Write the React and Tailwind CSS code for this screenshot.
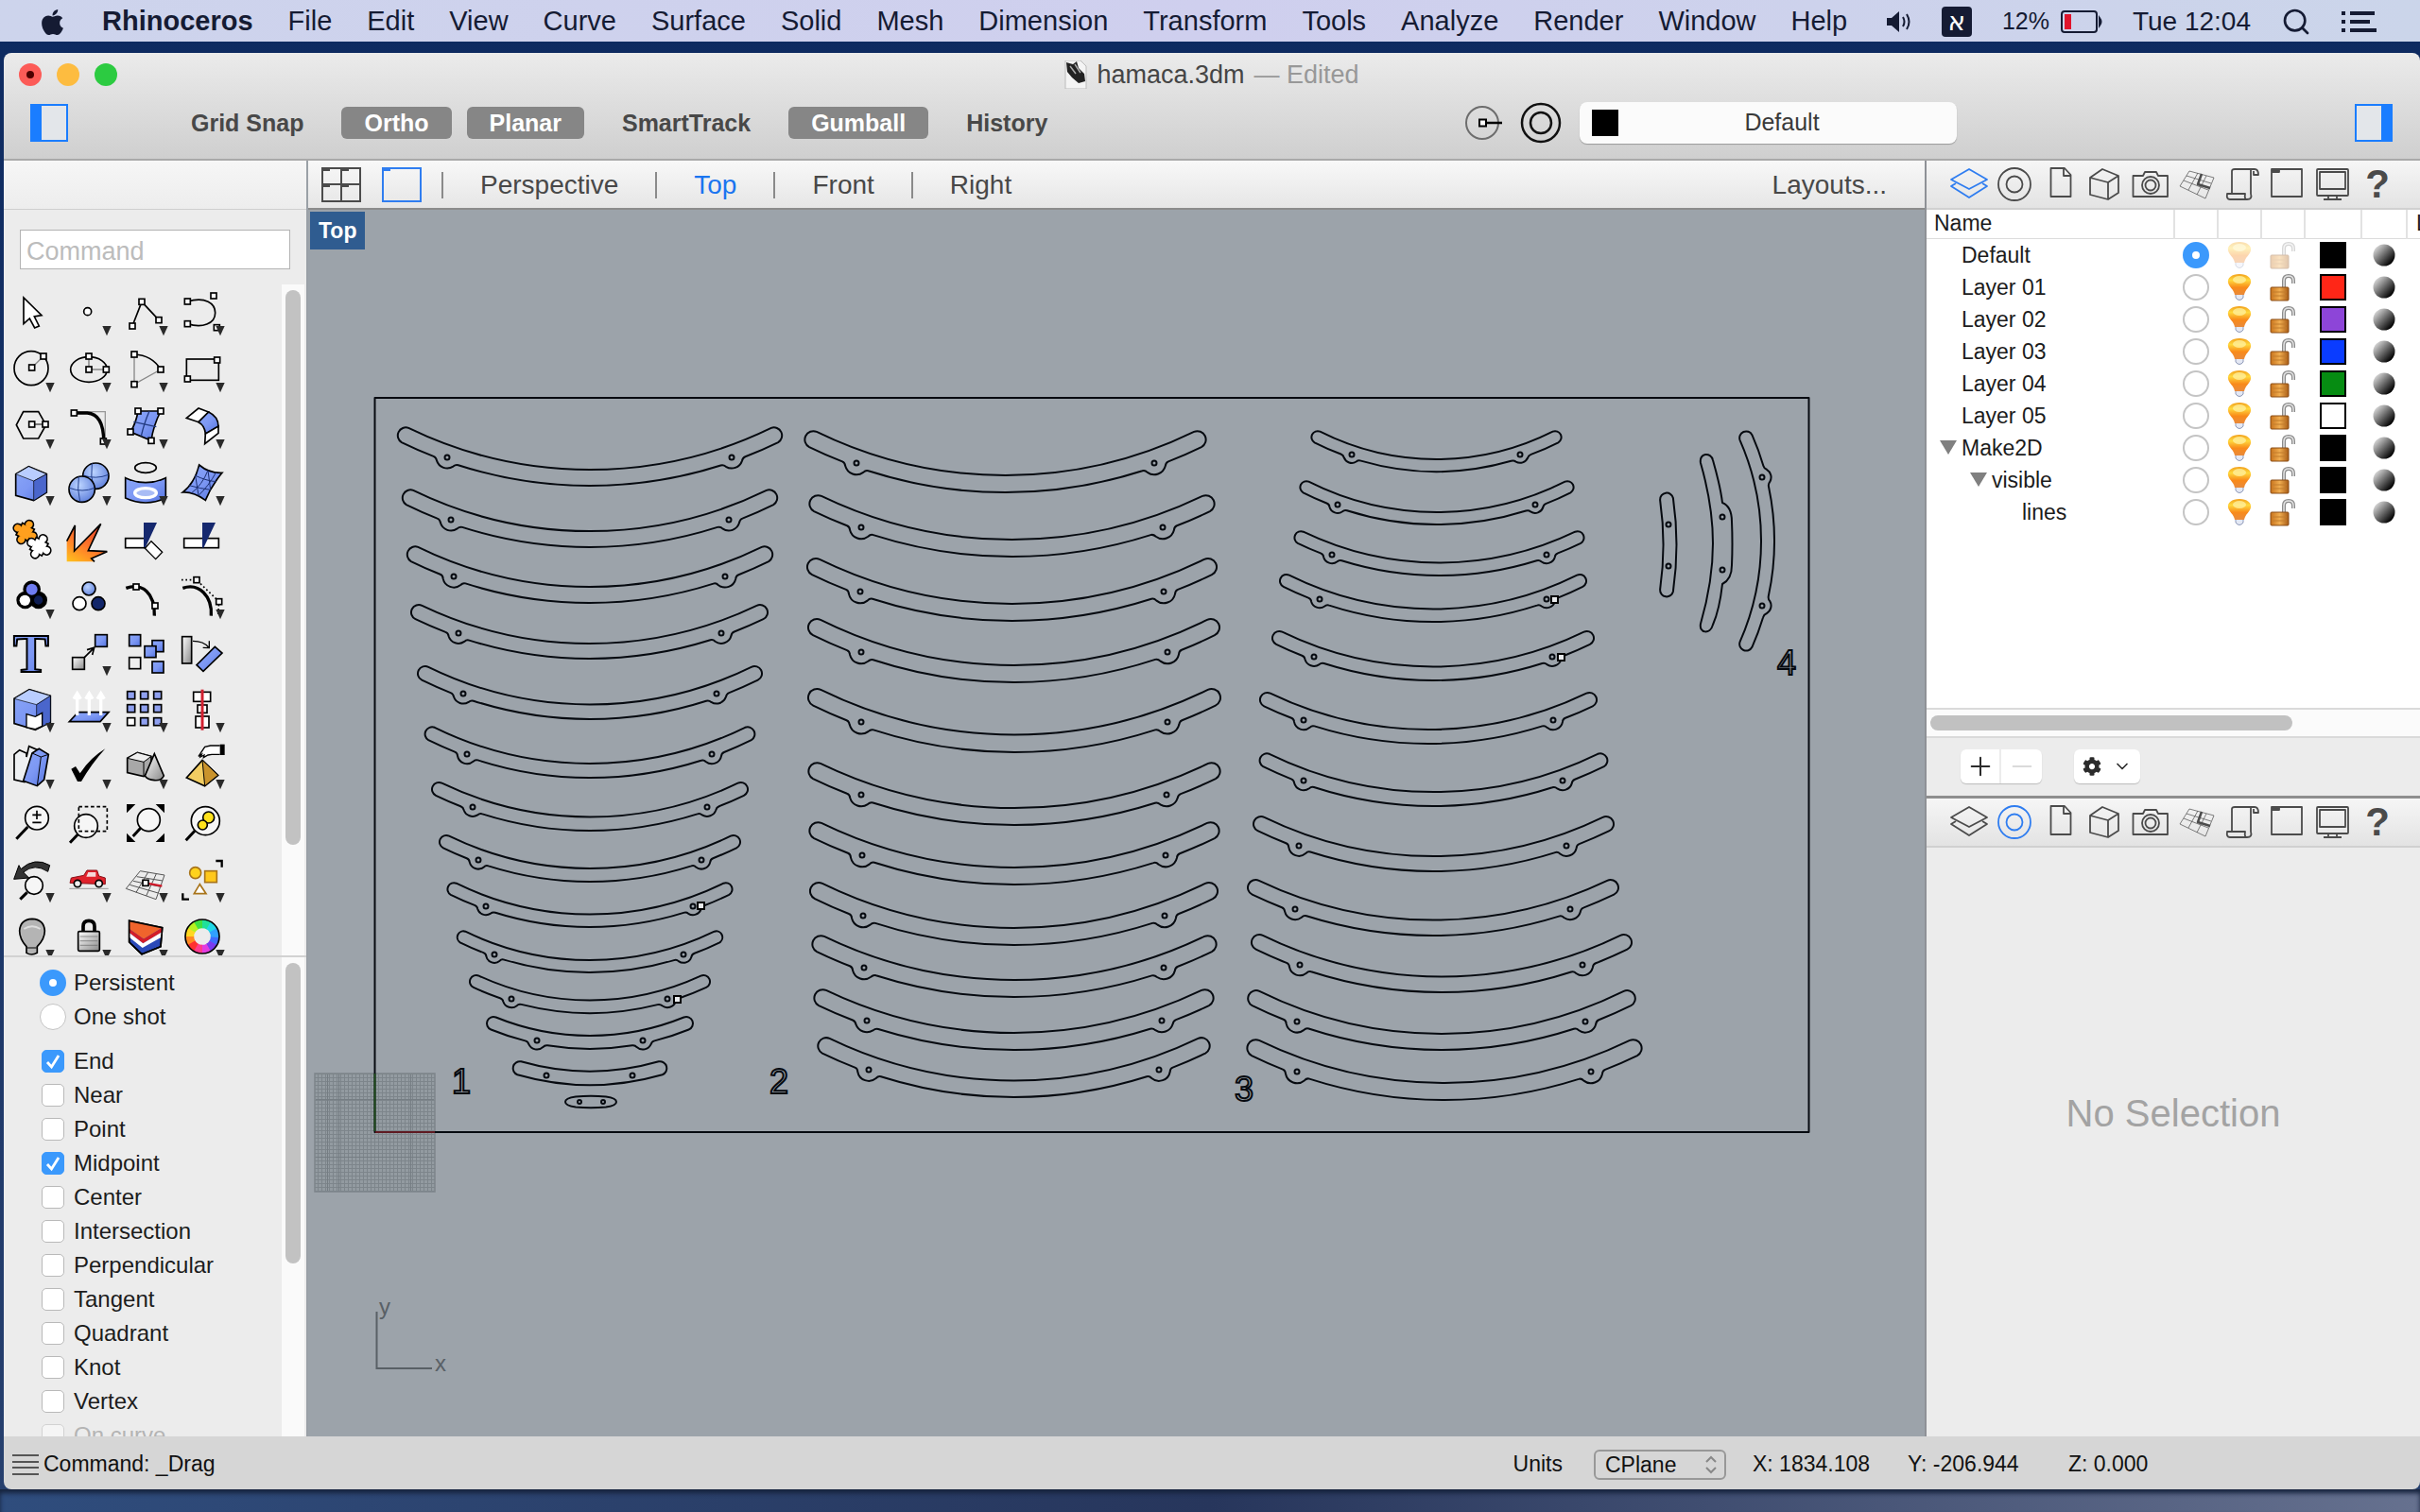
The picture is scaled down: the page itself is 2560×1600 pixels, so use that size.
import { useState } from 'react'
import { FaApple, FaCog } from 'react-icons/fa'
import { Search, ChevronDown, Plus, Minus } from 'lucide-react'
import clsx from 'clsx'

const MENUS = [
  'File', 'Edit', 'View', 'Curve', 'Surface', 'Solid', 'Mesh', 'Dimension',
  'Transform', 'Tools', 'Analyze', 'Render', 'Window', 'Help',
]

const TOGGLES = ['Grid Snap', 'Ortho', 'Planar', 'SmartTrack', 'Gumball', 'History']

const VIEWS = ['Perspective', 'Top', 'Front', 'Right']

const SNAPS = [
  'End', 'Near', 'Point', 'Midpoint', 'Center', 'Intersection',
  'Perpendicular', 'Tangent', 'Quadrant', 'Knot', 'Vertex',
]

const LAYERS = [
  { name: 'Default', color: 'bg-black', current: true },
  { name: 'Layer 01', color: 'bg-[#ff2617]' },
  { name: 'Layer 02', color: 'bg-[#8d45d8]' },
  { name: 'Layer 03', color: 'bg-[#0a3cff]' },
  { name: 'Layer 04', color: 'bg-[#068c12]' },
  { name: 'Layer 05', color: 'bg-white' },
  { name: 'Make2D', color: 'bg-black', open: true },
  { name: 'visible', color: 'bg-black', open: true, depth: 1 },
  { name: 'lines', color: 'bg-black', depth: 2 },
]

// left, right, top, bottom, thickness, hole 1 x, hole 2 x, hole y
const SLATS = [
  [420, 828, 452, 514, 17, 473, 774, 484],
  [425, 823, 518, 579, 17, 477, 771, 550],
  [430, 818, 578, 638, 17, 480, 767, 610],
  [435, 812, 640, 697, 16, 485, 763, 670],
  [442, 806, 705, 761, 15.5, 490, 758, 734],
  [449, 799, 769, 823, 15, 494, 753, 798],
  [457, 791, 828, 879, 14.5, 500, 748, 854],
  [465, 783, 884, 933, 14, 506, 742, 910],
  [473, 775, 934, 981, 13.5, 514, 733, 959],
  [483, 765, 985, 1029, 13, 523, 723, 1010],
  [497, 751, 1032, 1072, 13.5, 541, 706, 1057],
  [515, 733, 1076, 1110, 14, 568, 680, 1101],

  [851, 1276, 456, 521, 18, 906, 1221, 490],
  [856, 1285, 524, 589, 18, 911, 1230, 558],
  [854, 1287, 591, 657, 18, 910, 1231, 626],
  [855, 1290, 655, 722, 18, 911, 1235, 690],
  [855, 1291, 729, 796, 18.5, 911, 1235, 764],
  [855, 1291, 807, 873, 18, 911, 1234, 841],
  [856, 1290, 870, 936, 18, 912, 1233, 905],
  [857, 1288, 934, 1000, 18, 913, 1232, 969],
  [859, 1287, 990, 1055, 18, 914, 1231, 1024],
  [861, 1284, 1047, 1111, 18, 917, 1229, 1080],
  [865, 1280, 1098, 1161, 17.5, 919, 1226, 1132],

  [1387, 1652, 456, 499, 13, 1430, 1608, 481],
  [1375, 1665, 509, 555, 13, 1415, 1624, 534],
  [1369, 1676, 562, 609, 13.5, 1409, 1636, 587],
  [1354, 1678, 608, 658, 13.5, 1396, 1636, 634],
  [1346, 1686, 668, 720, 14.5, 1390, 1642, 695],
  [1333, 1689, 733, 787, 15, 1379, 1643, 762],
  [1332, 1701, 797, 853, 15, 1379, 1653, 826],
  [1326, 1707, 864, 922, 16, 1374, 1657, 895],
  [1320, 1712, 931, 990, 16.5, 1370, 1661, 962],
  [1324, 1726, 989, 1050, 16.5, 1375, 1674, 1021],
  [1320, 1730, 1048, 1111, 17, 1372, 1677, 1081],
  [1319, 1737, 1100, 1164, 18, 1372, 1683, 1134],
]

// Curved strip with round ends; `bumps` adds the ear round each hole on the outer side
function slatPath([xl, xr, yt, yb, t, h1, h2, hy], bumps) {
  const r = t / 2
  const a = (xr - xl) / 2 - r
  const s = yb - yt - t
  const R = (a * a + s * s) / (2 * s)
  const cx = (xl + xr) / 2
  const cy = yb - r - R
  const ri = R - r
  const ro = R + r
  const end = Math.asin(a / R)
  const on = (rad, ang) => `${(cx + rad * Math.sin(ang)).toFixed(1)} ${(cy + rad * Math.cos(ang)).toFixed(1)}`

  let d = `M${on(ri, -end)} A${ri} ${ri} 0 0 0 ${on(ri, end)} A${r} ${r} 0 0 1 ${on(ro, end)} `
  if (bumps) {
    const rb = t * 0.68
    for (const hx of [h2, h1]) {
      const dist = Math.hypot(hx - cx, hy - cy)
      const ang = Math.atan2(hx - cx, hy - cy)
      const phi = Math.acos(Math.min(1, (ro * ro + dist * dist - rb * rb) / (2 * ro * dist)))
      const cut = 3 / ro
      const lift = (base, dir) => {
        const px = cx + ro * Math.sin(base) - hx
        const py = cy + ro * Math.cos(base) - hy
        const q = Math.atan2(py, px) + dir * 0.3
        return `${(hx + rb * Math.cos(q)).toFixed(1)} ${(hy + rb * Math.sin(q)).toFixed(1)}`
      }
      d += `A${ro} ${ro} 0 0 1 ${on(ro, ang + phi + cut)} Q${on(ro, ang + phi)} ${lift(ang + phi, 1)} `
      d += `A${rb} ${rb} 0 0 1 ${lift(ang - phi, -1)} Q${on(ro, ang - phi)} ${on(ro, ang - phi - cut)} `
    }
  }
  return `${d}A${ro} ${ro} 0 0 1 ${on(ro, -end)} A${r} ${r} 0 0 1 ${on(ri, -end)}Z`
}

function Slat({ spec, bumps = true }) {
  return (
    <g>
      <path d={slatPath(spec, bumps)} />
      <circle cx={spec[5]} cy={spec[7]} r="2.5" />
      <circle cx={spec[6]} cy={spec[7]} r="2.5" />
    </g>
  )
}

function Drawing() {
  return (
    <svg viewBox="326 222 1710 1298" className="h-full w-full" aria-label="Top viewport">
      <defs>
        <pattern id="grid" width="4" height="4" patternUnits="userSpaceOnUse">
          <path d="M0 .5H4M.5 0V4" stroke="#7d858b" strokeWidth="1" />
        </pattern>
      </defs>
      <rect x="333" y="1136" width="127" height="125" fill="#939ba1" />
      <rect x="333" y="1136" width="127" height="125" fill="url(#grid)" stroke="#7d858b" strokeWidth="1.5" />
      <path d="M346.500 1137V1260M358.500 1137V1260M434.500 1137V1260M334 1163.500H459M334 1224.500H459" stroke="#757d83" />

      <g fill="none" stroke="#060a10" strokeWidth="2" strokeLinejoin="round">
        <rect x="396.500" y="421" width="1517" height="777" />
        {SLATS.map((spec) => (
          <Slat key={spec.join()} spec={spec} />
        ))}
        <Slat spec={[542, 706, 1123, 1148, 14.5, 578, 669, 1138]} bumps={false} />
        <path d="M609 1160.500Q625 1159 641 1160.500Q652 1162 652 1166Q652 1170 641 1171.500Q625 1173 609 1171.500Q598 1170 598 1166Q598 1162 609 1160.500Z" />
        <circle cx="613" cy="1166" r="2" />
        <circle cx="638" cy="1166" r="2" />
        <g transform="matrix(0 1 1 0 0 0)">
          <Slat spec={[521, 632, 1756, 1773.5, 14, 555, 599, 1765]} bumps={false} />
          <Slat spec={[456, 689, 1840, 1877, 14, 505, 641, 1864]} />
        </g>
        <path d="M1799 490C1797 479 1810 478 1812 487Q1820 515 1822 532Q1832 536 1832 552Q1833 575 1832 598Q1832 613 1822 618Q1819 645 1812 661C1809 672 1797 670 1799 660Q1812 615 1812 575Q1812 535 1799 490Z" />
        <circle cx="1822" cy="547" r="2.500" />
        <circle cx="1822" cy="603" r="2.500" />
      </g>

      {/* snap markers */}
      <g fill="#e8eaec" stroke="#000" strokeWidth="2">
        <rect x="738" y="955" width="7" height="7" />
        <rect x="713" y="1054" width="7" height="7" />
        <rect x="1641" y="631" width="7" height="7" />
        <rect x="1648" y="692" width="7" height="7" />
      </g>

      <g className="font-['Liberation_Sans']" fontSize="36" fill="#9aa2a8" stroke="#060a10" strokeWidth="2">
        <text x="478" y="1157">1</text>
        <text x="814" y="1157">2</text>
        <text x="1306" y="1165">3</text>
        <text x="1880" y="714">4</text>
      </g>

      <path d="M396.500 1136V1197" stroke="#1f4a1c" strokeWidth="2" />
      <path d="M397 1198H460" stroke="#5e1a22" strokeWidth="2" />
      <path d="M398.500 1388V1448H457" fill="none" stroke="#596066" strokeWidth="2" />
      <g className="font-['Liberation_Sans']" fontSize="24" fill="#596066">
        <text x="401" y="1391">y</text>
        <text x="460" y="1451">x</text>
      </g>
    </svg>
  )
}

function Node({ x, y }) {
  return <rect x={x - 9} y={y - 9} width="18" height="18" fill="#fff" stroke="#000" strokeWidth="5" />
}

// Jigsaw piece: the outline pass goes first, the fill pass covers the inner seams
function Piece({ x, y, fill }) {
  const shape = (
    <>
      <rect x="-19" y="-19" width="38" height="38" />
      <circle cx="0" cy="-27" r="11" />
      <circle cx="0" cy="27" r="11" />
      <circle cx="-27" cy="0" r="11" />
      <circle cx="27" cy="0" r="11" />
    </>
  )
  return (
    <g transform={`translate(${x} ${y}) rotate(28)`}>
      <g fill={fill} strokeWidth="10">{shape}</g>
      <g fill={fill} stroke="none">{shape}</g>
    </g>
  )
}

const HUES = [
  '#3f6bff', '#7a3cf0', '#e23be0', '#ff3a8c', '#ff3030', '#ff8a20',
  '#ffd820', '#b8f020', '#40e040', '#20e09a', '#20d8e8', '#30a0ff',
]

function ColorWheel() {
  return (
    <>
      {HUES.map((hue, i) => {
        const at = (n) => `${90 + 40 * Math.cos((n * Math.PI) / 6)} ${90 + 40 * Math.sin((n * Math.PI) / 6)}`
        return <path key={hue} d={`M${at(i)}A40 40 0 0 1 ${at(i + 1.1)}`} stroke={hue} strokeWidth="27" fill="none" />
      })}
      <circle cx="90" cy="90" r="54" strokeWidth="5" fill="none" />
    </>
  )
}

// Palette tools, row by row. Each is drawn in a 180 x 180 box.
const TOOLS = [
  { name: 'Select', flyout: false, art: <path d="M63 42V125L82 108L98 138L112 132L97 102L120 98Z" fill="#fff" /> },
  { name: 'Point', art: <circle cx="86" cy="86" r="12" fill="#fff" /> },
  { name: 'Polyline', art: <><path d="M48 132L78 55L132 113" /><Node x={78} y={55} /><Node x={48} y={132} /><Node x={132} y={113} /></> },
  { name: 'Control point curve', art: <><path d="M43 54C100 38 131 60 131 90C131 125 90 140 43 125" /><Node x={43} y={54} /><Node x={126} y={36} /><Node x={43} y={125} /><Node x={136} y={137} /></> },

  { name: 'Circle', art: <><circle cx="87" cy="86" r="54" /><path d="M89 84L126 48" stroke="#888" strokeWidth="4" /><Node x={89} y={84} /><Node x={126} y={48} /></> },
  { name: 'Ellipse', art: <><ellipse cx="90" cy="90" rx="58" ry="40" /><path d="M90 48V90H145" stroke="#555" strokeWidth="3" /><Node x={90} y={48} /><Node x={90} y={90} /><Node x={145} y={90} /></> },
  { name: 'Arc', art: <><path d="M54 42V137L138 90" stroke="#888" strokeWidth="4" /><path d="M54 42Q110 44 138 90" /><Node x={54} y={42} /><Node x={138} y={90} /><Node x={54} y={137} /></> },
  { name: 'Rectangle', art: <><rect x="40" y="57" width="102" height="67" /><Node x={43} y={120} /><Node x={137} y={60} /></> },

  { name: 'Polygon', art: <><path d="M40 86L62 44H110L134 86L110 129H62Z" /><path d="M89 84H132" strokeWidth="3" /><Node x={89} y={84} /><Node x={132} y={84} /></> },
  { name: 'Fillet curves', art: <><path d="M43 44H142V138" stroke="#999" strokeWidth="4" /><path d="M43 48H85Q137 52 137 138" strokeWidth="10" /><Node x={43} y={48} /><Node x={136} y={138} /></> },
  { name: 'Surface from points', art: <><path d="M66 42H138Q114 90 108 136L42 108Q60 80 66 42Z" fill="url(#blue)" /><path d="M102 42Q84 84 76 122M52 76L124 92" stroke="#223a80" strokeWidth="4" /><Node x={66} y={42} /><Node x={138} y={42} /><Node x={108} y={136} /><Node x={42} y={108} /></> },
  { name: 'Fillet surfaces', art: <><path d="M40 64L78 33L110 45L78 77Z" fill="#fff" /><path d="M78 77L110 45Q142 60 141 92L100 114Q98 88 78 77Z" fill="url(#blue)" /><path d="M100 114L141 90V112L98 146Z" fill="#fff" /></> },

  { name: 'Box', art: <><path d="M38 62L79 38L136 62V120L95 146L38 130Z" fill="url(#blue)" /><path d="M38 62L79 38L136 62L95 84Z" fill="#b9cdff" strokeWidth="2" /><path d="M95 84L136 62V120L95 146Z" fill="#4a66cc" strokeWidth="2" /></> },
  { name: 'Sphere', art: <><circle cx="112" cy="68" r="41" fill="url(#ball)" /><path d="M100 28Q94 70 106 108M72 66Q112 80 152 64" strokeWidth="3" stroke="#24408c" /><circle cx="68" cy="110" r="41" fill="url(#ball)" /><path d="M58 70Q52 110 62 150M28 106Q70 122 108 106" strokeWidth="3" stroke="#24408c" /></> },
  { name: 'Project curves', art: <><ellipse cx="90" cy="42" rx="34" ry="16" /><path d="M26 74Q90 104 154 74V138Q90 168 26 138Z" fill="url(#blue)" /><ellipse cx="90" cy="122" rx="34" ry="15" stroke="#fff" strokeWidth="10" fill="#a9bcf5" /></> },
  { name: 'Mesh', art: <><path d="M80 33Q112 60 153 58Q118 100 100 145Q62 118 28 120Q66 90 80 33Z" fill="url(#blue)" /><path d="M108 50Q90 96 56 122M134 56Q110 100 78 130M66 66Q104 84 134 86M48 98Q84 108 116 112M68 66L78 130M108 50L116 112" strokeWidth="3" stroke="#1c2f70" /></> },

  { name: 'Join', flyout: false, art: <><Piece x={68} y={66} fill="#ffa01e" /><Piece x={112} y={112} fill="#fff" /></> },
  { name: 'Explode', flyout: false, art: <><path d="M20 160V95L46 45L44 126L128 40L88 125L148 128L98 150L108 160Z" fill="url(#fire)" stroke="none" /><path d="M20 95L46 45L44 126L128 40L88 125L148 128L98 150L108 160" /></> },
  { name: 'Trim', flyout: false, art: <><rect x="26" y="86" width="62" height="30" fill="#fff" /><path d="M108 95L143 130L122 152L88 118Z" fill="#fff" strokeWidth="4" /><path d="M84 36H126L90 114H84Z" fill="#15286e" stroke="none" /></> },
  { name: 'Split', flyout: false, art: <><rect x="32" y="86" width="110" height="30" fill="#fff" /><path d="M90 36H132L94 116H90Z" fill="#15286e" stroke="none" /></> },

  { name: 'Group', art: <><g strokeWidth="14"><circle cx="89" cy="68" r="21" fill="#6f7cf0" /><circle cx="68" cy="102" r="21" fill="#fff" /><circle cx="110" cy="102" r="21" fill="#0e1d52" /></g><circle cx="89" cy="68" r="18" fill="#6f7cf0" stroke="none" /><circle cx="67" cy="103" r="17" fill="#fff" stroke="none" /></> },
  { name: 'Ungroup', flyout: false, art: <><circle cx="90" cy="66" r="21" fill="url(#ball)" /><circle cx="60" cy="113" r="21" fill="#fff" /><circle cx="120" cy="113" r="21" fill="#12266a" /></> },
  { name: 'Edit points', flyout: false, art: <><path d="M28 64C80 46 120 80 118 152" strokeWidth="10" /><Node x={60} y={60} /><Node x={120} y={120} /></> },
  { name: 'Control points', art: <><path d="M28 64C80 46 122 90 118 152" strokeWidth="10" /><path d="M24 38H72L143 107L140 150" strokeDasharray="5 8" /><Node x={72} y={38} /><Node x={143} y={107} /></> },

  { name: 'Text', flyout: false, art: <text x="87" y="151" textAnchor="middle" fontSize="170" fontWeight="bold" fill="url(#blue)" strokeWidth="6" className="font-['Liberation_Serif']">T</text> },
  { name: 'Move', art: <><rect x="110" y="32" width="38" height="38" fill="url(#blue)" /><rect x="38" y="104" width="38" height="38" fill="url(#grey)" /><path d="M76 104L107 73M84 80L107 73L101 96" /></> },
  { name: 'Copy', flyout: false, art: <><rect x="38" y="32" width="36" height="36" fill="url(#blue)" /><rect x="111" y="50" width="36" height="36" fill="url(#blue)" /><rect x="87" y="68" width="36" height="36" fill="url(#blue)" /><rect x="38" y="104" width="36" height="36" fill="#eee" /><rect x="111" y="117" width="36" height="36" fill="url(#blue)" /></> },
  { name: 'Rotate', flyout: false, art: <><rect x="26" y="38" width="30" height="85" fill="url(#grey)" /><path d="M130 70L153 90L93 148L72 128Z" fill="url(#blue)" /><path d="M60 52Q94 52 110 72M112 52V74L92 73" strokeWidth="4" /></> },

  { name: 'Solid editing', art: <><path d="M33 55L81 26L148 46V130L100 154L33 134Z" fill="url(#blue)" /><path d="M33 55L81 26L148 46L104 74Z" fill="#b9cdff" strokeWidth="2" /><path d="M104 74L148 46V130L104 152Z" fill="#4a66cc" strokeWidth="2" /><path d="M72 104L100 112L122 100V142L100 152L72 146Z" fill="#fff" strokeWidth="4" /></> },
  { name: 'Extrude', art: <><path d="M56 98H153L126 128H28Z" fill="url(#blue)" /><path d="M53 108V40M91 108V40M128 108V40M42 56L53 38L64 56M80 56L91 38L102 56M117 56L128 38L139 56" stroke="#fff" strokeWidth="10" /></> },
  { name: 'Array', art: <>{[32, 74, 116].map((y) => [32, 74, 116].map((x) => <rect key={`${x}${y}`} x={x} y={y} width="24" height="24" fill={x === 32 && y === 116 ? '#fff' : '#8fa0f0'} />))}</> },
  { name: 'Align', art: <><rect x="62" y="34" width="54" height="30" fill="#fff" /><rect x="75" y="75" width="30" height="25" fill="#fff" /><rect x="69" y="111" width="42" height="36" fill="#fff" /><path d="M90 26V155" stroke="#d22030" strokeWidth="9" /></> },

  { name: 'Deform', art: <><path d="M33 52L50 38L72 48V60L80 26L136 50L66 140L33 132Z" fill="#eef0f2" /><path d="M90 48L112 34L142 52L128 132L106 152L62 136Z" fill="url(#blue)" /><path d="M90 48L118 60L142 52M118 60L106 152" strokeWidth="3" /></> },
  { name: 'Check', art: <path d="M34 98L48 90L62 112Q95 62 142 34Q100 80 66 138H54Z" fill="#000" stroke="none" /> },
  { name: 'Boolean', art: <><path d="M32 64L64 46L108 58V106L84 122L32 110Z" fill="#a8a8a8" /><path d="M32 64L64 46L108 58L84 76Z" fill="#eee" strokeWidth="3" /><path d="M84 76V122" strokeWidth="3" /><path d="M118 50L148 120Q140 136 118 134Q96 132 88 120Z" fill="url(#grey)" /></> },
  { name: 'Edit solid', art: <><path d="M90 70L140 118L98 152L40 126Z" fill="#f2cd62" /><path d="M90 70L98 152L140 118Z" fill="#c9932c" strokeWidth="3" /><path d="M146 24H116L98 28L78 58L88 52L84 60L96 54L94 62L108 54L120 52H146" fill="#fff" strokeWidth="4" /><path d="M146 20H161V54H146Z" fill="#000" stroke="none" /></> },

  { name: 'Zoom dynamic', flyout: false, art: <><circle cx="105" cy="74" r="37" fill="#f6f6f6" /><path d="M105 50V78M91 64H119M91 88H119" /><path d="M76 102L40 140" strokeWidth="9" /></> },
  { name: 'Zoom window', flyout: false, art: <><circle cx="81" cy="99" r="37" fill="#f6f6f6" /><rect x="58" y="38" width="90" height="78" strokeDasharray="11 8" /><path d="M55 126L30 152" strokeWidth="9" /></> },
  { name: 'Zoom extents', flyout: false, art: <><circle cx="100" cy="80" r="36" fill="#f6f6f6" /><path d="M74 106L50 132" strokeWidth="9" /><path d="M30 30H58L30 58ZM150 30H122L150 58ZM30 150H58L30 122ZM150 150H122L150 122Z" fill="#000" stroke="none" /></> },
  { name: 'Zoom selected', flyout: false, art: <><circle cx="100" cy="83" r="45" fill="#f6f6f6" /><circle cx="110" cy="72" r="18" fill="#ffe21c" /><circle cx="91" cy="96" r="15" fill="#ffe21c" /><path d="M66 115L38 145" strokeWidth="9" /></> },

  { name: 'Undo view', art: <><path d="M62 66Q98 36 140 64L146 44Q98 16 54 56L48 44L32 88L80 84Z" fill="#333" strokeWidth="3" /><circle cx="96" cy="108" r="28" fill="#f6f6f6" /><path d="M74 130L52 152" strokeWidth="9" /></> },
  { name: 'Named view', art: <><path d="M30 100L34 84L74 76L84 60H116L122 78L142 84V104Z" fill="#e0222c" stroke="#8a1018" strokeWidth="3" /><path d="M88 66H112V80H82Z" fill="#f6d8d8" stroke="none" /><circle cx="54" cy="102" r="11" fill="#eee" /><circle cx="122" cy="102" r="11" fill="#eee" /><path d="M28 118H152" stroke="#999" strokeWidth="3" /></> },
  { name: 'CPlane', art: <><path d="M73 62L150 75L123 152L28 118ZM98 66L60 130M124 71L92 141M62 80L144 93M51 94L137 112M40 106L130 132" stroke="#555" strokeWidth="3" /><path d="M90 100L142 110" stroke="#d01828" strokeWidth="7" /><Node x={90} y={100} /></> },
  { name: 'Selection filter', art: <><path d="M133 30H152V50M28 133V152H48" strokeWidth="7" /><g stroke="#a8741a"><circle cx="68" cy="68" r="18" fill="#ffd21c" /><rect x="98" y="62" width="38" height="36" fill="#ffc81c" /><path d="M82 104L64 134H102Z" fill="#fff" /></g></> },

  { name: 'Show', art: <><path d="M72 142V122Q50 98 50 72Q52 36 90 34Q128 36 130 72Q130 98 106 122V142Q88 152 72 142Z" fill="#b4b4b4" /><path d="M74 126H104" strokeWidth="3" /><path d="M64 66Q90 50 116 66" stroke="#ddd" strokeWidth="6" /></> },
  { name: 'Lock', art: <><path d="M72 74V58Q72 40 90 40Q108 40 108 58V74" strokeWidth="11" /><rect x="56" y="74" width="68" height="62" rx="4" fill="url(#grey)" /><path d="M62 90H118M62 104H118M62 118H118" strokeWidth="2" stroke="#666" /></> },
  { name: 'Layers', art: <><path d="M38 40L143 62L138 122L78 146L38 108Z" fill="#2b49b8" /><path d="M38 40L143 62L84 98L38 66Z" fill="#f0642c" stroke="none" /><path d="M38 66L84 98L143 62V76L82 112L38 78Z" fill="#d41c28" stroke="none" /><path d="M38 78L82 112L142 76L140 92L80 126L38 92Z" fill="#fff" stroke="none" /><path d="M38 40L143 62L138 122L78 146L38 108Z" /></> },
  { name: 'Object color', art: <ColorWheel /> },
]

function ToolButton({ tool }) {
  return (
    <button type="button" aria-label={tool.name} className="size-[60px]">
      <svg viewBox="0 0 180 180" className="size-[60px]" fill="none" stroke="#000" strokeWidth="5">
        {tool.art}
        {tool.flyout !== false && <path d="M133 132H161L147 163Z" fill="#2a2a2a" stroke="none" />}
      </svg>
    </button>
  )
}

// Shared paints for the palette and layer icons
function Paints() {
  return (
    <svg className="absolute size-0" aria-hidden="true">
      <defs>
        <linearGradient id="blue" x1="0" y1="0" x2="1" y2="1">
          <stop offset="0" stopColor="#8aa6f8" />
          <stop offset=".5" stopColor="#7d98f4" />
          <stop offset="1" stopColor="#5474e0" />
        </linearGradient>
        <radialGradient id="ball" cx=".4" cy=".35" r=".7">
          <stop offset="0" stopColor="#bcd4ff" />
          <stop offset="1" stopColor="#5f80dc" />
        </radialGradient>
        <linearGradient id="grey" x1="0" y1="0" x2="1" y2="1">
          <stop offset="0" stopColor="#fff" />
          <stop offset="1" stopColor="#888" />
        </linearGradient>
        <linearGradient id="fire" x1="0" y1="1" x2=".6" y2="0">
          <stop offset="0" stopColor="#ffc21c" />
          <stop offset=".5" stopColor="#ff7a2a" />
          <stop offset="1" stopColor="#e8482a" />
        </linearGradient>
        <linearGradient id="lamp" x1="0" y1="0" x2="0" y2="1">
          <stop offset="0" stopColor="#f2a01c" />
          <stop offset=".3" stopColor="#ffd83c" />
          <stop offset=".65" stopColor="#f98a1a" />
          <stop offset="1" stopColor="#e88a3c" />
        </linearGradient>
        <linearGradient id="brass" x1="0" y1="0" x2="1" y2="0">
          <stop offset="0" stopColor="#c8731c" />
          <stop offset=".5" stopColor="#f0ad50" />
          <stop offset="1" stopColor="#a85c16" />
        </linearGradient>
        <linearGradient id="orb" x1=".1" y1=".15" x2=".85" y2=".85">
          <stop offset="0" stopColor="#d8d8d8" />
          <stop offset=".5" stopColor="#6a6a6a" />
          <stop offset="1" stopColor="#000" />
        </linearGradient>
      </defs>
    </svg>
  )
}

const PANELS = [
  { name: 'Layers', art: <><path d="M24 8L43 19L24 29L5 19Z" /><path d="M10 23L5 26L24 38L43 26L38 23" /></> },
  { name: 'Properties', art: <><circle cx="24" cy="24" r="17" /><circle cx="24" cy="24" r="8.500" /></> },
  { name: 'Notes', art: <><path d="M14.500 7H29L35.500 14V37H14.500Z" /><path d="M28 7V15H35" /></> },
  { name: 'Blocks', art: <path d="M8 17L21 8L38 15V33L27 40L8 35ZM8 17L27 22L38 15M27 22V40" /> },
  { name: 'Named views', art: <><path d="M5.500 15H16L18 11H30L32 15H42V37H5.500Z" /><circle cx="24" cy="25" r="9" /><circle cx="24" cy="25" r="5.500" /></> },
  { name: 'Named CPlanes', art: <><path d="M17 10L43 17L34 39L7 26ZM26 12L16 30M35 15L25 35M14 15L40 23M11 20L37 30" strokeWidth="1" opacity=".7" /><path d="M30 13L26 24L39 28" strokeWidth="2.500" /></> },
  { name: 'Command history', art: <path d="M14 34V10Q14 8 17 8H38Q42 8 42 14H37V10M34 8V34Q36 40 30 40H12Q8 40 9 34H28Q27 40 30 40" /> },
  { name: 'Layouts', art: <><path d="M8 8H40V37H8Z" /><path d="M9 9H16V11H9Z" fill="currentColor" /></> },
  { name: 'Display', art: <><rect x="8" y="8" width="33" height="28" rx="1" /><rect x="11" y="11" width="27" height="18" /><path d="M20 36V39M29 36V39M15 40H34" /></> },
]

function PanelTabs({ active }) {
  return (
    <nav className="flex h-[50px] shrink-0 items-center bg-linear-to-b from-[#f6f6f6] to-[#e3e3e3] pl-[21px] text-[#4b4b4b]">
      {PANELS.map((panel) => (
        <button
          key={panel.name}
          type="button"
          aria-label={panel.name}
          className={clsx('size-12 shrink-0', panel.name === active && 'text-[#2f7df0]')}
        >
          <svg viewBox="0 0 48 48" className="size-12" fill="none" stroke="currentColor" strokeWidth="1.800" strokeLinejoin="round">
            {panel.art}
          </svg>
        </button>
      ))}
      <button type="button" className="w-12 shrink-0 text-[42px] leading-[48px] font-bold">?</button>
    </nav>
  )
}

function MenuBar() {
  return (
    <header className="flex h-11 shrink-0 items-center bg-linear-to-r from-[#cdd4ec] via-[#cfcfee] to-[#cbd5ea] pt-[2px] pr-[46px] pl-10 text-[29px] whitespace-nowrap text-[#151b33]">
      <button type="button" aria-label="Apple menu" className="w-[31px]">
        <FaApple className="size-[31px]" />
      </button>
      <nav className="ml-[37px] flex gap-[37px]">
        <button type="button" className="font-bold">Rhinoceros</button>
        {MENUS.map((menu) => (
          <button key={menu} type="button">{menu}</button>
        ))}
      </nav>
      <div className="ml-auto flex items-center gap-8">
        <svg viewBox="0 0 26 28" className="h-7 w-[26px]" fill="currentColor">
          <path d="M0 10H5L13 3V25L5 18H0Z" />
          <path d="M17 9Q20 14 17 19M21 6Q26 14 21 22" fill="none" stroke="currentColor" strokeWidth="2" />
        </svg>
        <span className="flex h-8 w-8 items-center justify-center rounded bg-[#151b33] font-['DejaVu_Sans'] text-[28px] leading-none text-white">א</span>
        <div className="flex items-center gap-3 text-[25px]">
          12%
          <svg viewBox="0 0 44 24" className="h-6 w-11" fill="none" stroke="currentColor" strokeWidth="2">
            <rect x="1" y="1" width="37" height="22" rx="3" />
            <rect x="4" y="4" width="7" height="16" fill="#e0142c" stroke="none" />
            <path d="M41 8Q44 12 41 16Z" fill="currentColor" />
          </svg>
        </div>
        <span className="text-[28px]">Tue 12:04</span>
        <Search className="size-8" strokeWidth={2} />
        <svg viewBox="0 0 37 22" className="h-[22px] w-[37px]" stroke="currentColor" strokeWidth="4">
          <path d="M0 2H4M9 2H35M0 11H4M9 11H30M0 20H4M9 20H37" />
        </svg>
      </div>
    </header>
  )
}

function SidebarButton({ side }) {
  return (
    <button type="button" aria-label={`Toggle ${side} sidebar`} className="h-10 w-10 border-2 border-[#1a7dff] bg-[#e3e6ea]">
      <span className={clsx('block h-full w-[10px] bg-[#1a7dff]', side === 'right' && 'ml-auto')} />
    </button>
  )
}

function TitleBar() {
  const [on, setOn] = useState(['Ortho', 'Planar', 'Gumball'])

  function toggle(name) {
    setOn((prev) => (prev.includes(name) ? prev.filter((n) => n !== name) : [...prev, name]))
  }

  return (
    <div className="shrink-0 rounded-t-lg border-b-2 border-[#a9a9a9] bg-linear-to-b from-[#ebebeb] to-[#cfcfcf] pb-[10px]">
      <div className="grid h-[46px] grid-cols-[1fr_auto_1fr] items-center">
        <div className="flex gap-4 pl-4">
          <button type="button" aria-label="Close" className="flex size-6 items-center justify-center rounded-full bg-[#fc5b57]">
            <span className="size-2 rounded-full bg-[#4d0000]" />
          </button>
          <button type="button" aria-label="Minimize" className="size-6 rounded-full bg-[#fdbc40]" />
          <button type="button" aria-label="Zoom" className="size-6 rounded-full bg-[#2ccb41]" />
        </div>
        <h1 className="flex items-center gap-[10px] text-[27px] text-[#454545]">
          <svg viewBox="0 0 24 30" className="h-[30px] w-6">
            <path d="M1 0H17L23 6V30H1Z" fill="#f4f4f4" stroke="#bbb" />
            <path d="M2 2L9 4L13 1L15 8L21 14L22 22L15 24L8 18L3 12Z" fill="#222" />
            <path d="M6 6L12 14M11 4L17 13" stroke="#aaa" strokeWidth="1.500" />
          </svg>
          <span className="flex gap-[10px]">hamaca.3dm <span className="text-[#989898]">— Edited</span></span>
        </h1>
      </div>
      <div className="flex h-14 items-center pr-[29px] pl-7">
        <SidebarButton side="left" />
        <div className="ml-[106px] flex gap-4">
          {TOGGLES.map((name) => (
            <button
              key={name}
              type="button"
              aria-pressed={on.includes(name)}
              onClick={() => toggle(name)}
              className={clsx(
                'h-[34px] rounded-md px-6 text-[25px] leading-[34px] font-bold',
                on.includes(name) ? 'bg-[#868686] text-white' : 'text-[#484848]',
              )}
            >
              {name}
            </button>
          ))}
        </div>
        <div className="mr-[421px] ml-auto flex items-center">
          <svg viewBox="0 0 42 42" className="size-[42px]" fill="none" stroke="#6d6d6d" strokeWidth="2">
            <circle cx="18" cy="21" r="17" />
            <path d="M20 21H39" stroke="#000" strokeWidth="2.500" />
            <rect x="15" y="17.500" width="7" height="7" fill="#fff" stroke="#000" />
          </svg>
          <svg viewBox="0 0 44 44" className="ml-4 size-11" fill="none" stroke="#111" strokeWidth="2.500">
            <circle cx="22" cy="22" r="20" />
            <circle cx="22" cy="22" r="11" />
          </svg>
          <label className="ml-[19px] flex h-11 w-[399px] items-center rounded-lg bg-[#fbfbfb] pr-3 pl-[13px] shadow-[0_1px_1px_#9a9a9a]">
            <span className="size-7 shrink-0 bg-black" />
            <select aria-label="Current layer" className="w-full appearance-none bg-transparent text-center text-[25px] text-[#3a3a3a] [text-align-last:center]">
              <option>Default</option>
            </select>
          </label>
        </div>
        <SidebarButton side="right" />
      </div>
    </div>
  )
}

function ScrollTrack({ thumb }) {
  return (
    <div className="mr-[2px] flex w-6 shrink-0 justify-center bg-[#fafafa] pt-[6px]">
      <div className={clsx('w-4 rounded-full bg-[#c2c2c2]', thumb)} />
    </div>
  )
}

function SnapOption({ label, type = 'checkbox', disabled, checked }) {
  return (
    <label className={clsx('flex h-9 items-center text-[24px] leading-9', disabled ? 'text-[#b4b4b4]' : 'text-[#1c1c1c]')}>
      <span className="relative flex w-7 items-center justify-center">
        <input
          type={type}
          name={type === 'radio' ? 'snap-mode' : undefined}
          defaultChecked={checked}
          disabled={disabled}
          className={clsx(
            'peer appearance-none border bg-white',
            type === 'radio'
              ? 'size-7 rounded-full border-[#c4c4c4] checked:border-[10px] checked:border-[#3b99fc]'
              : 'size-6 rounded-[5px] border-[#b9b9b9] checked:border-[#3b99fc] checked:bg-[#3b99fc]',
            disabled && 'opacity-50',
          )}
        />
        {type === 'checkbox' && (
          <svg viewBox="0 0 24 24" className="pointer-events-none absolute hidden size-6 peer-checked:block" fill="none" stroke="#fff" strokeWidth="2.800">
            <path d="M6 13L10.500 18L18 6" />
          </svg>
        )}
      </span>
      <span className="ml-2">{label}</span>
    </label>
  )
}

function LeftSidebar() {
  return (
    <aside className="flex w-[322px] shrink-0 flex-col border-r-2 border-[#9aa0a6] bg-[#ececec]">
      <div className="h-[52px] shrink-0 border-b border-[#cfcfcf] bg-linear-to-b from-[#f6f6f6] to-[#ededed]" />
      <div className="shrink-0 px-[17px] pt-[21px] pb-4">
        <input
          type="text"
          aria-label="Command"
          placeholder="Command"
          className="h-[42px] w-[286px] border border-[#b3b3b3] bg-white px-[6px] pt-1 text-[27px] placeholder:text-[#bcbcbc]"
        />
      </div>
      <div className="flex min-h-0 flex-7 justify-between overflow-hidden">
        <div className="grid auto-rows-[60px] grid-cols-[repeat(4,60px)]">
          {TOOLS.map((tool) => (
            <ToolButton key={tool.name} tool={tool} />
          ))}
        </div>
        <ScrollTrack thumb="h-[587px]" />
      </div>
      <div className="flex min-h-0 flex-5 justify-between overflow-hidden border-t-2 border-[#d2d2d2]">
        <div className="flex flex-col pt-[9px] pl-[38px]">
          <SnapOption type="radio" label="Persistent" checked />
          <SnapOption type="radio" label="One shot" />
          <div className="mt-[11px]">
            {SNAPS.map((snap) => (
              <SnapOption key={snap} label={snap} checked={snap === 'End' || snap === 'Midpoint'} />
            ))}
            <SnapOption label="On curve" disabled />
          </div>
        </div>
        <ScrollTrack thumb="h-[318px]" />
      </div>
    </aside>
  )
}

function ViewTabs() {
  const [view, setView] = useState('Top')

  return (
    <nav className="flex h-[52px] shrink-0 items-center border-b-2 border-[#8c8c8c] bg-linear-to-b from-[#f8f8f8] to-[#e6e6e6] pt-[2px] pr-10 pl-[14px] text-[28px] text-[#484848]">
      <button type="button" aria-label="Four viewports">
        <svg viewBox="0 0 42 38" className="h-[38px] w-[42px]" fill="none" stroke="#4b4b4b" strokeWidth="2">
          <path d="M1 1H41V36H1ZM21 1V36M1 18H41" />
          <path d="M2 3H9M22 3H29M2 20H9M22 20H29" />
        </svg>
      </button>
      <button type="button" aria-label="Single viewport" className="ml-[22px]">
        <svg viewBox="0 0 42 38" className="h-[38px] w-[42px]" fill="none" stroke="#2f7df0" strokeWidth="2">
          <path d="M1 1H41V36H1ZM2 3H9" />
        </svg>
      </button>
      <div className="ml-[21px] flex items-center">
        {VIEWS.map((name) => (
          <button
            key={name}
            type="button"
            onClick={() => setView(name)}
            className="flex items-center"
          >
            <span className="h-7 w-[2px] bg-[#8a8a8a]" />
            <span className={clsx('px-[39px]', view === name && 'text-[#1a75f0]')}>{name}</span>
          </button>
        ))}
      </div>
      <button type="button" className="ml-auto">Layouts...</button>
    </nav>
  )
}

function Bulb({ faded }) {
  return (
    <svg viewBox="0 0 28 32" className={clsx('mx-auto h-8 w-7', faded && 'opacity-35')}>
      <path d="M10 22H18V27Q14 32 10 27Z" fill="#e4e8f4" stroke="#8f9ab8" strokeWidth="1" />
      <path d="M14 2C22 2 27 6 26 11C25 16 20 18 19 24H9C8 18 3 16 2 11C1 6 6 2 14 2Z" fill="url(#lamp)" />
      <ellipse cx="14" cy="8" rx="7" ry="4" fill="#fff3a8" opacity=".7" />
    </svg>
  )
}

function Padlock({ faded }) {
  return (
    <svg viewBox="0 0 28 32" className={clsx('mx-auto h-8 w-7', faded && 'opacity-35')}>
      <path d="M15 17V9Q15 4 20 4Q25 4 25 9V12" fill="none" stroke="#8b8b8b" strokeWidth="4" />
      <path d="M15 17V9Q15 4 20 4Q25 4 25 9V12" fill="none" stroke="#e4e4e4" strokeWidth="1.500" />
      <rect x="1" y="16" width="19" height="14" rx="1" fill="url(#brass)" stroke="#8a4c14" />
      <path d="M3 21H18M3 25H18" stroke="#c27c2c" strokeWidth="1" />
    </svg>
  )
}

function LayerRow({ layer, current, onPick }) {
  return (
    <tr className="h-[34px]">
      <td className="p-0">
        <div className={clsx('flex items-center', layer.depth === 1 && 'pl-8', layer.depth === 2 && 'pl-16')}>
          <span className="flex w-[37px] justify-end pr-[5px]">
            {layer.open && (
              <svg viewBox="0 0 18 15" className="h-[15px] w-[18px]" fill="#808080">
                <path d="M0 0H18L9 15Z" />
              </svg>
            )}
          </span>
          {layer.name}
        </div>
      </td>
      <td className="p-0">
        <input
          type="radio"
          name="current-layer"
          aria-label={`Make ${layer.name} current`}
          checked={current}
          onChange={onPick}
          className="mx-auto block size-7 appearance-none rounded-full border-2 border-[#c4c4c4] bg-white checked:border-[10px] checked:border-[#3b99fc]"
        />
      </td>
      <td className="p-0"><Bulb faded={current} /></td>
      <td className="p-0"><Padlock faded={current} /></td>
      <td className="p-0"><div className={clsx('mx-auto size-7 border-2 border-black', layer.color)} /></td>
      <td className="p-0">
        <svg viewBox="0 0 24 24" className="mx-auto size-6">
          <circle cx="12" cy="12" r="11.500" fill="url(#orb)" />
        </svg>
      </td>
      <td />
    </tr>
  )
}

function LayersPanel() {
  const [current, setCurrent] = useState('Default')

  return (
    <>
      <div className="min-h-0 flex-[526] overflow-hidden border-t-2 border-[#d0d0d0] bg-white">
        <table className="w-[560px] table-fixed text-[23px] leading-[34px] text-[#1c1c1c]">
          <colgroup>
            <col className="w-[262px]" />
            <col className="w-[46px]" />
            <col className="w-[46px]" />
            <col className="w-[46px]" />
            <col className="w-[60px]" />
            <col className="w-12" />
            <col />
          </colgroup>
          <thead>
            <tr className="h-[30px] border-b border-[#dcdcdc] leading-[29px] [&>th]:border-r-2 [&>th]:border-[#e2e2e2]">
              <th className="p-0 pl-2 text-left font-normal">Name</th>
              <th /><th /><th /><th /><th />
              <th className="p-0 pl-[9px] text-left font-normal">L</th>
            </tr>
          </thead>
          <tbody>
            {LAYERS.map((layer) => (
              <LayerRow
                key={layer.name}
                layer={layer}
                current={layer.name === current}
                onPick={() => setCurrent(layer.name)}
              />
            ))}
          </tbody>
        </table>
      </div>
      <div className="flex h-8 shrink-0 items-center border-y-2 border-[#dadada] bg-[#fbfbfb] pl-1">
        <div className="h-4 w-[383px] rounded-full bg-[#c1c1c1]" />
      </div>
      <div className="flex h-[64px] shrink-0 items-center gap-[34px] border-b-3 border-[#8e8e8e] pl-9 text-[#2b2b2b]">
        <div className="flex overflow-hidden rounded-md bg-white shadow-[0_1px_1px_#bcbcbc]">
          <button type="button" aria-label="Add layer" className="flex h-9 w-[43px] items-center justify-center border-r-2 border-[#ececec]">
            <Plus className="size-8" strokeWidth={1.5} />
          </button>
          <button type="button" aria-label="Remove layer" className="flex h-9 w-[43px] items-center justify-center text-[#dadada]">
            <Minus className="size-8" strokeWidth={1.5} />
          </button>
        </div>
        <button type="button" aria-label="Layer actions" className="flex h-9 w-[70px] items-center justify-center gap-3 rounded-md bg-white shadow-[0_1px_1px_#bcbcbc]">
          <FaCog className="size-5" />
          <ChevronDown className="size-5" />
        </button>
      </div>
    </>
  )
}

function RightSidebar() {
  return (
    <aside className="flex w-[524px] shrink-0 flex-col border-l-2 border-[#8e9196] bg-[#ececec]">
      <PanelTabs active="Layers" />
      <LayersPanel />
      <PanelTabs active="Properties" />
      <div className="flex flex-[562] items-center justify-center border-t-2 border-[#d0d0d0] pb-[60px] text-[40px] text-[#a3a3a3]">
        No Selection
      </div>
    </aside>
  )
}

function StatusBar() {
  return (
    <footer className="flex h-14 shrink-0 items-center rounded-b-lg bg-[#d6d6d6] pt-[3px] pl-[9px] text-[23px] whitespace-nowrap text-[#111]">
      <svg viewBox="0 0 28 22" className="h-[22px] w-7" stroke="#555" strokeWidth="2">
        <path d="M0 1H28M0 8H28M0 14H28M0 21H28" />
      </svg>
      <span className="ml-[5px]">Command: _Drag</span>
      <label htmlFor="coords" className="mr-[33px] ml-auto">Units</label>
      <div className="relative">
        <select id="coords" className="block h-8 w-[140px] appearance-none rounded-md border-2 border-[#989898] bg-transparent pl-[10px] leading-7">
          <option>CPlane</option>
        </select>
        <svg viewBox="0 0 14 20" className="pointer-events-none absolute top-[6px] right-[9px] h-5 w-[14px]" fill="none" stroke="#888" strokeWidth="2">
          <path d="M2 7L7 2L12 7M2 13L7 18L12 13" />
        </svg>
      </div>
      <span className="ml-7 w-[164px]">X: 1834.108</span>
      <span className="w-[170px]">Y: -206.944</span>
      <span className="w-[372px]">Z: 0.000</span>
    </footer>
  )
}

export default function App() {
  return (
    <div className="flex h-screen flex-col overflow-hidden bg-linear-to-b from-[#0d2a60] to-[#27406e] font-['Liberation_Sans',sans-serif]">
      <Paints />
      <MenuBar />
      <main className="mt-3 ml-1 flex min-h-0 flex-1 flex-col">
        <TitleBar />
        <div className="flex min-h-0 flex-1">
          <LeftSidebar />
          <section className="flex min-w-0 flex-1 flex-col">
            <ViewTabs />
            <div className="relative min-h-0 flex-1 bg-[#9ca3aa]">
              <Drawing />
              <span className="absolute top-[2px] left-[2px] bg-[#2f5c90] px-[9px] text-[23px] leading-10 font-bold text-white">Top</span>
            </div>
          </section>
          <RightSidebar />
        </div>
        <StatusBar />
      </main>
      <div className="h-6 shrink-0 bg-linear-to-r from-[#2f4d7d] via-[#27365c] to-[#66718f] shadow-[inset_0_4px_5px_#16233d]" />
    </div>
  )
}
